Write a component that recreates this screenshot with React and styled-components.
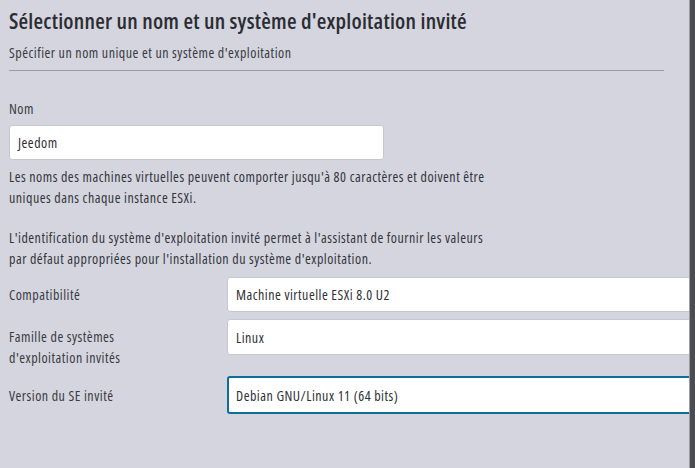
import React from 'react';
import styled, { createGlobalStyle } from 'styled-components';

const GlobalStyle = createGlobalStyle`
  html, body {
    margin: 0;
    padding: 0;
    background: #d4d5df;
  }
  body {
    font-family: "Open Sans", Lato, sans-serif;
    font-stretch: 80%;
    letter-spacing: 0.5px;
    color: #2f3036;
  }
`

const Screen = styled.div`
  display: flex;
  width: 695px;
  height: 468px;
  background: #d4d5df;
  overflow: hidden;
`

const Wizard = styled.div`
  flex: 1;
  min-width: 0;
  overflow: hidden;
  padding: 6px 0 0 9px;
`

const ScrollEdge = styled.div`
  width: 5px;
  flex: none;
  background: #4b4c52;
  border-left: 1px solid #9a9ba3;
`

const Title = styled.h1`
  margin: 0;
  font-size: 22px;
  font-weight: 600;
  letter-spacing: 0.22px;
  line-height: 28px;
  color: #2c2d33;
`

const Subtitle = styled.div`
  margin-top: 9px;
  font-size: 14px;
  line-height: 20px;
  color: #3a3b41;
`

const Divider = styled.hr`
  margin: 7px 0 0 0;
  width: 655px;
  border: none;
  border-top: 1px solid #9a9ba4;
`

const Label = styled.div`
  font-size: 14px;
  line-height: 20px;
  color: #3a3b41;
`

const NameLabel = styled(Label)`
  margin-top: 28px;
`

const Field = styled.div`
  box-sizing: border-box;
  width: ${p => p.width || 'auto'};
  height: ${p => p.height || 35}px;
  background: #fff;
  border: ${p => (p.focused ? '2px solid #0f6e94' : '1px solid #c6c7cf')};
  border-radius: 3px;
  padding: 0 ${p => (p.focused ? 7 : 8)}px;
  display: flex;
  align-items: center;
  font-size: 14px;
  color: #2f3036;
`

const NameField = styled(Field)`
  margin-top: 6px;
`

const Help = styled.p`
  margin: 6px 0 0 0;
  font-size: 14px;
  line-height: 21px;
  color: #34353b;
  width: 492px;
`

const Note = styled(Help)`
  margin-top: 19px;
`

const Form = styled.div`
  display: grid;
  grid-template-columns: 218px 480px;
  align-items: start;
  margin-top: 8px;
`

const Row = styled.div`
  display: contents;
`

const RowLabel = styled(Label)`
  padding-top: ${p => p.top || 8}px;
  line-height: 21px;
`

const RowField = styled(Field)`
  margin-bottom: ${p => p.gap || 0}px;
`

const rows = [
  { label: 'Compatibilité', value: 'Machine virtuelle ESXi 8.0 U2', height: 35, gap: 7 },
  { label: ['Famille de systèmes', "d'exploitation invités"], value: 'Linux', height: 36, gap: 21 },
  { label: 'Version du SE invité', value: 'Debian GNU/Linux 11 (64 bits)', height: 38, focused: true }
];

export default function App() {
  return (
    <>
      <GlobalStyle />
      <Screen>
        <Wizard>
          <Title>Sélectionner un nom et un système d'exploitation invité</Title>
          <Subtitle>Spécifier un nom unique et un système d'exploitation</Subtitle>
          <Divider />
          <NameLabel>Nom</NameLabel>
          <NameField width="375px" height={35}>Jeedom</NameField>
          <Help>
            Les noms des machines virtuelles peuvent comporter jusqu'à 80 caractères et doivent être
            uniques dans chaque instance ESXi.
          </Help>
          <Note>
            L'identification du système d'exploitation invité permet à l'assistant de fournir les valeurs
            par défaut appropriées pour l'installation du système d'exploitation.
          </Note>
          <Form>
            {rows.map(r => (
              <Row key={r.value}>
                <RowLabel top={r.focused ? 9 : 7}>
                  {Array.isArray(r.label) ? r.label.map(l => <div key={l}>{l}</div>) : r.label}
                </RowLabel>
                <RowField height={r.height} gap={r.gap} focused={r.focused}>
                  {r.value}
                </RowField>
              </Row>
            ))}
          </Form>
        </Wizard>
        <ScrollEdge />
      </Screen>
    </>
  );
}
